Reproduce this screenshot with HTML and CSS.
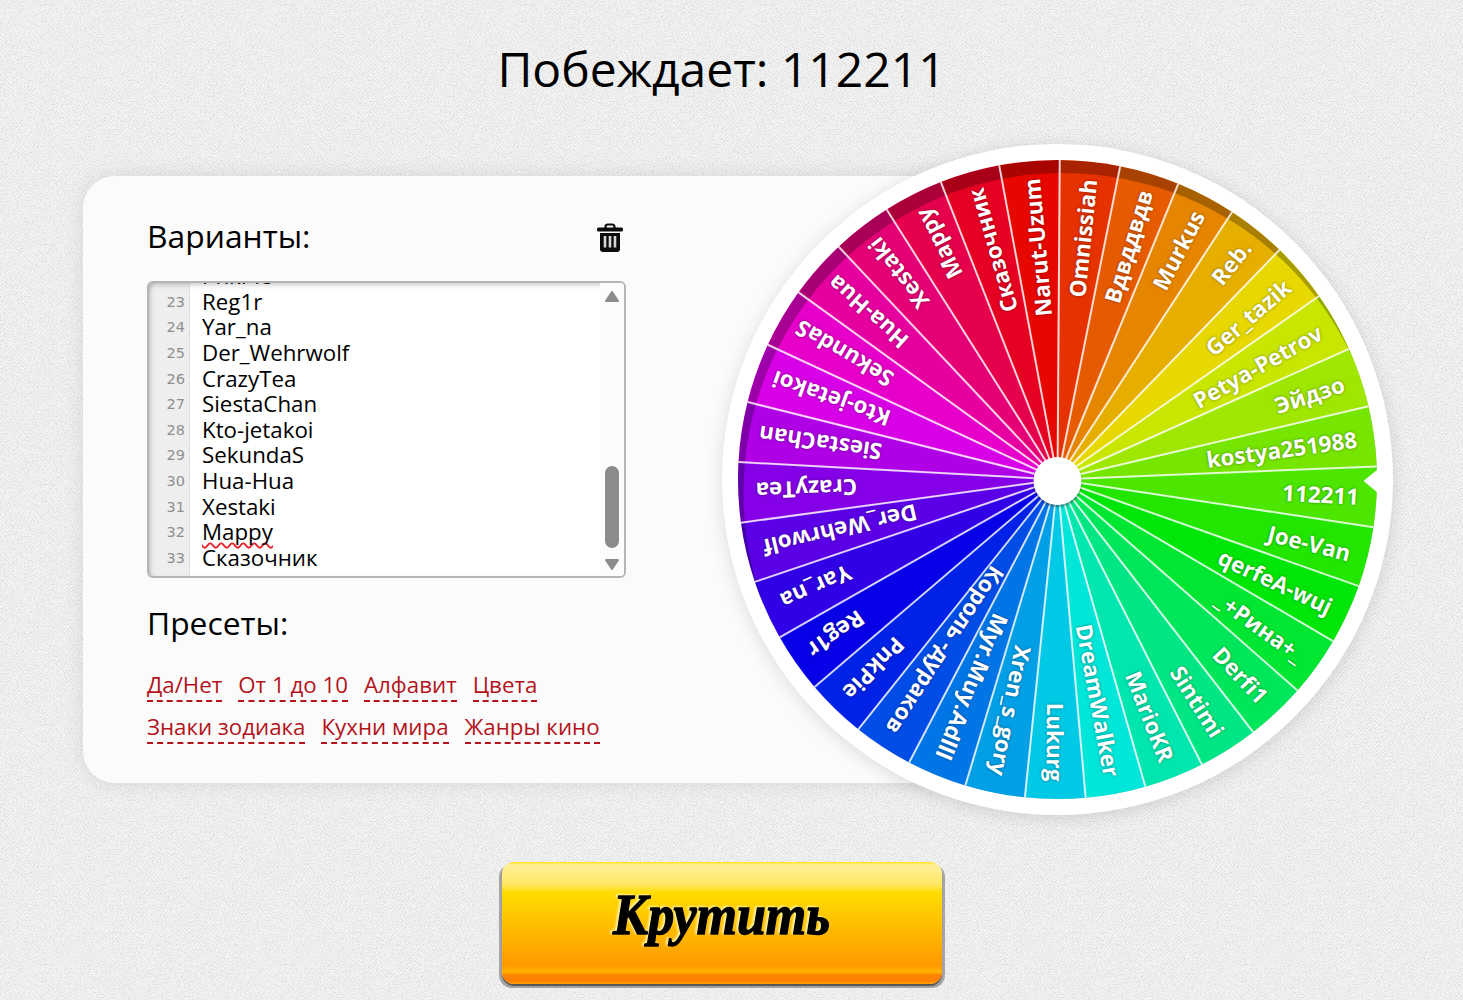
FILE: index.html
```html
<!DOCTYPE html>
<html lang="ru">
<head>
    <meta charset="UTF-8">
    <meta name="viewport" content="width=device-width, initial-scale=1.0">
    <title>Колесо</title>
    <link rel="stylesheet" href="styles.css">
</head>
<body>

<h1 class="result">Побеждает: 112211</h1>

<div class="stage">
    <div class="card">
        <div class="card-head">
            <h2>Варианты:</h2>
            <button class="clear" aria-label="Очистить">
                <svg width="26" height="30" viewBox="0 0 26 30">
                    <path d="M8.500 5V4Q8.500 1.500 11 1.500H15Q17.500 1.500 17.500 4V5" fill="none" stroke="#0b0b0b" stroke-width="2.200"/>
                    <rect x="0" y="4.500" width="26" height="4" rx="1.500" fill="#0b0b0b"/>
                    <path d="M3 10H23V26Q23 29 20 29H6Q3 29 3 26Z" fill="#0b0b0b"/>
                    <path d="M8 13V24.500M13 13V24.500M18 13V24.500" stroke="#d6d6d6" stroke-width="2.600"/>
                </svg>
            </button>
        </div>

        <div class="editor">
            <ol class="lines" start="22">
                <li><span class="num"></span><span>PnkPie</span></li>
                <li><span class="num">23</span><span>Reg1r</span></li>
                <li><span class="num">24</span><span>Yar_na</span></li>
                <li><span class="num">25</span><span>Der_Wehrwolf</span></li>
                <li><span class="num">26</span><span>CrazyTea</span></li>
                <li><span class="num">27</span><span>SiestaChan</span></li>
                <li><span class="num">28</span><span>Kto-jetakoi</span></li>
                <li><span class="num">29</span><span>SekundaS</span></li>
                <li><span class="num">30</span><span>Hua-Hua</span></li>
                <li><span class="num">31</span><span>Xestaki</span></li>
                <li><span class="num">32</span><span class="misspelled">Mappy</span></li>
                <li><span class="num">33</span><span>Сказочник</span></li>
            </ol>
            <div class="scrollbar">
                <svg width="16" height="14" viewBox="0 0 16 14"><path d="M8 3L14 12H2Z" fill="#8b8b8b" stroke="#8b8b8b" stroke-width="2" stroke-linejoin="round"/></svg>
                <div class="thumb"></div>
                <svg width="16" height="14" viewBox="0 0 16 14"><path d="M8 12L14 3H2Z" fill="#8b8b8b" stroke="#8b8b8b" stroke-width="2" stroke-linejoin="round"/></svg>
            </div>
        </div>

        <h2 class="presets-title">Пресеты:</h2>
        <div class="presets">
            <a>Да/Нет</a>
            <a>От 1 до 10</a>
            <a>Алфавит</a>
            <a>Цвета</a>
            <a>Знаки зодиака</a>
            <a>Кухни мира</a>
            <a>Жанры кино</a>
        </div>
    </div>

    <div class="wheel">
        <svg id="wheel" width="671" height="671" viewBox="-335.5 -335.5 671 671">
            <g id="sectors"></g>
            <!-- shade along the upper left rim -->
            <path class="shade" fill-rule="evenodd" d="M-319.500 0A319.500 319.500 0 1 1 319.500 0A319.500 319.500 0 1 1 -319.500 0ZM-314 13A319.500 319.500 0 1 0 325 13A319.500 319.500 0 1 0 -314 13Z" clip-path="url(#disc)"/>
            <clipPath id="disc"><circle r="319.500"/></clipPath>
            <g id="rays"></g>
            <g id="labels"></g>
            <circle class="hub" cy="1.500" r="24"/>
            <path d="M306 1.500L320 -10V13Z" fill="#fff"/>
        </svg>
    </div>
</div>

<button class="spin">
    <svg width="440" height="122" viewBox="0 0 440 122">
        <text x="111" y="72" textLength="217" lengthAdjust="spacingAndGlyphs">Крутить</text>
    </svg>
</button>

<script src="wheel.js"></script>
</body>
</html>
```
FILE: styles.css
```css
* {
    box-sizing: border-box;
}

body {
    margin: 0;
    height: 1000px;
    overflow: hidden;
    padding-right: 20px;
    font-family: "Open Sans", "Noto Sans", sans-serif;
    color: #000;
    background-color: #efefef;
    background-image:
        url("data:image/svg+xml,%3Csvg xmlns='http://www.w3.org/2000/svg' width='240' height='240'%3E%3Cfilter id='n'%3E%3CfeTurbulence type='fractalNoise' baseFrequency='.75' numOctaves='2' stitchTiles='stitch'/%3E%3CfeColorMatrix values='0 0 0 0 0 0 0 0 0 0 0 0 0 0 0 .3 0 0 0 -.13'/%3E%3C/filter%3E%3Crect width='240' height='240' filter='url(%23n)'/%3E%3C/svg%3E"),
        repeating-linear-gradient(45deg, rgba(255, 255, 255, 0.3) 0 1.4px, transparent 1.4px 2.8px),
        repeating-linear-gradient(-45deg, rgba(255, 255, 255, 0.3) 0 1.4px, transparent 1.4px 2.8px);
}

.result {
    margin: 0;
    height: 144px;
    padding-top: 36px;
    text-align: center;
    font-size: 48px;
    font-weight: 400;
    line-height: 66px;
}

.stage {
    display: flex;
    align-items: center;
    height: 671px;
    padding-left: 83px;
}

.card {
    flex: none;
    width: 960px;
    height: 607px;
    padding: 40px 64px;
    border-radius: 32px;
    background: #fbfbfb;
    box-shadow: 0 0 20px rgba(0, 0, 0, 0.1);
}

.card-head {
    display: flex;
    justify-content: space-between;
    align-items: center;
    width: 476px;
    height: 44px;
}

h2 {
    margin: 0 0 4px;
    font-size: 31.8px;
    font-weight: 400;
    line-height: 42px;
}

.clear {
    display: flex;
    padding: 0;
    border: 0;
    background: none;
}

.editor {
    display: flex;
    width: 479px;
    height: 297px;
    margin-top: 21px;
    overflow: hidden;
    border: 2px solid #b5b5b5;
    border-radius: 6px;
    background: linear-gradient(to right, #eee 40px, #ddd 40px 41px, #fff 41px);
    box-shadow: inset 0 4px 5px -2px rgba(0, 0, 0, 0.2), inset 4px 0 5px -3px rgba(0, 0, 0, 0.2);
}

.lines {
    flex: 1;
    display: flex;
    flex-direction: column;
    justify-content: flex-end;
    margin: 0;
    padding: 0 0 5.6px;
    list-style: none;
    font-size: 22.3px;
}

.lines li {
    display: flex;
    flex: none;
    height: 25.6px;
    line-height: 25.6px;
}

.num {
    width: 36px;
    margin-right: 17px;
    padding-top: 1px;
    text-align: right;
    font-family: "DejaVu Sans", sans-serif;
    font-size: 14.5px;
    color: #8f8f8f;
}

.misspelled {
    text-decoration: underline wavy #e8222c 1.5px;
    text-decoration-skip-ink: none;
    text-underline-offset: 2px;
}

.scrollbar {
    display: flex;
    flex-direction: column;
    align-items: center;
    width: 24px;
    padding: 6px 0 5px;
    background: #fcfcfc;
}

.thumb {
    width: 14px;
    height: 82px;
    margin: auto 0 9px;
    border-radius: 7px;
    background: #8b8b8b;
}

.presets-title {
    margin-top: 24px;
}

.presets {
    display: flex;
    flex-wrap: wrap;
    gap: 10px 16px;
    width: 476px;
    margin-top: 26px;
}

.presets a {
    height: 32px;
    border-bottom: 2px dashed #b3141c;
    color: #b3141c;
    font-size: 22.3px;
    line-height: 29px;
    white-space: nowrap;
}

.wheel {
    flex: none;
    width: 671px;
    height: 671px;
    margin-left: -321px;
    border-radius: 50%;
    background: #fff;
    box-shadow: 0 3px 18px rgba(0, 0, 0, 0.13);
}

.wheel svg {
    display: block;
}

.shade {
    fill: rgba(0, 0, 0, 0.27);
}

#rays line {
    stroke: rgba(255, 255, 255, 0.8);
    stroke-width: 2;
}

#labels text {
    fill: #fff;
    font-size: 22.4px;
    font-weight: 700;
    text-anchor: end;
    text-shadow: 0 0 3px rgba(0, 0, 0, 0.45);
}

.hub {
    fill: #fff;
    filter: drop-shadow(0 2px 1px rgba(0, 0, 0, 0.4));
}

.spin {
    display: block;
    width: 440px;
    height: 122px;
    margin: 47px 0 0 502px;
    padding: 0;
    border: 0;
    border-radius: 12px;
    background:
        linear-gradient(to bottom, #ffe11c 0, #fff09a 3px, #ffe866 22px, #ffdc00 31px, #ffba00 68px, #ff9900 103px, #ffb400 110px, #ff8200 113px, #ff8000 119px, #ffa000 122px);
    box-shadow: 0 2px 1px #555, -2px 3px 0 1px #a6a6a6, 2px 3px 0 1px #a6a6a6;
    clip-path: inset(0 -6px -8px -6px);
}

.spin text {
    font-family: "Liberation Serif", serif;
    font-size: 58px;
    font-weight: 700;
    font-style: italic;
    fill: #000;
    stroke: #000;
    stroke-width: 1.4px;
    stroke-linejoin: round;
    filter: drop-shadow(-2px -1px 1px #fff3a0);
}
```
FILE: wheel.js
```js
const names = [
    'Narut-Uzum', 'Omnissiah', 'Вдвддвдв', 'Murkus', 'Reb.', 'Ger_tazik',
    'Petya-Petrov', 'Эйдзо', 'kostya251988', '112211', 'Joe-Van', 'qerfeA-wuj',
    '_+Рина+_', 'Derfi1', 'Sintimi', 'MarioKR', 'DreamWalker', 'Lukurg',
    'Xren_s_gory', 'Myr.Muy.Adlll', 'Король -дураков', 'PnkPie', 'Reg1r',
    'Yar_na', 'Der_Wehrwolf', 'CrazyTea', 'SiestaChan', 'Kto-jetakoi',
    'SekundaS', 'Hua-Hua', 'Xestaki', 'Mappy', 'Сказочник'
];

const radius = 319.5;
const step = 360 / names.length;
const start = -90 + 0.4 - step;

function point(angle) {
    const a = angle * Math.PI / 180;
    return (radius * Math.cos(a)).toFixed(2) + ' ' + (radius * Math.sin(a)).toFixed(2);
}

let sectors = '';
let rays = '';
let labels = '';

names.forEach(function(name, i) {
    const from = start + i * step;
    sectors += `<path d="M0 0L${point(from)}A${radius} ${radius} 0 0 1 ${point(from + step)}Z" fill="hsl(${i * step + 2}, 100%, 45%)"/>`;
    rays += `<line x2="${radius}" transform="rotate(${from})"/>`;
    labels += `<text x="302" y="9" transform="rotate(${from + step / 2})">${name}</text>`;
});

document.getElementById('sectors').innerHTML = sectors;
document.getElementById('rays').innerHTML = rays;
document.getElementById('labels').innerHTML = labels;
```
